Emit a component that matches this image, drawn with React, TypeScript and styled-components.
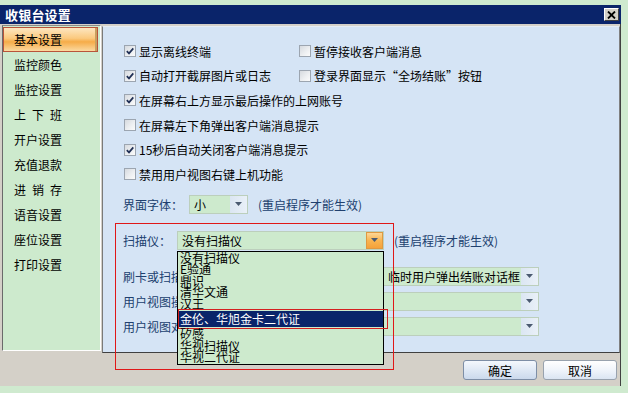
import React from 'react';
import styled, { createGlobalStyle } from 'styled-components';

const GlobalStyle = createGlobalStyle`
  html, body {
    margin: 0;
    padding: 0;
  }
  body {
    background: #cfeacf;
    font-family: 'Noto Sans CJK SC', 'Liberation Sans', sans-serif;
    font-size: 12px;
    color: #000;
  }
`;

const menuItems = [
  { label: '基本设置' },
  { label: '监控颜色' },
  { label: '监控设置' },
  { label: '上下班', spread: true },
  { label: '开户设置' },
  { label: '充值退款' },
  { label: '进销存', spread: true },
  { label: '语音设置' },
  { label: '座位设置' },
  { label: '打印设置' }
];

const scanners = [
  '没有扫描仪',
  'E验通',
  '鼎识',
  '清华文通',
  '汉王',
  '金伦、华旭金卡二代证',
  '矽感',
  '华视扫描仪',
  '华视二代证'
];

const CheckMark = (): JSX.Element => (
  <svg width="10" height="10" viewBox="0 0 10 10">
    <path d="M1.8 5.2 L4 7.4 L8.3 2.4" fill="none" stroke="#1f2f55" strokeWidth="1.7" />
  </svg>
);

const Arrow = (): JSX.Element => (
  <svg width="7" height="4" viewBox="0 0 7 4">
    <path d="M0 0 H7 L3.5 4 Z" fill="#4a5a70" />
  </svg>
);

interface CheckProps {
  label: string;
  checked?: boolean;
  wide?: boolean;
}

const Check = ({ label, checked, wide }: CheckProps): JSX.Element => (
  <CheckItem wide={wide}>
    <Box>{checked && <CheckMark />}</Box>
    <span>{label}</span>
  </CheckItem>
);

interface ComboProps {
  value?: string;
  width?: number;
  hot?: boolean;
  children?: React.ReactNode;
}

const Combo = ({ value, width, hot, children }: ComboProps): JSX.Element => (
  <ComboBox style={width ? { width } : undefined} grow={!width}>
    <ComboText>{value}</ComboText>
    <ComboButton hot={hot}>
      <Arrow />
    </ComboButton>
    {children}
  </ComboBox>
);

const App = (): JSX.Element => {
  return (
    <>
      <GlobalStyle />
      <Window>
        <TitleBar>
          <Title>收银台设置</Title>
          <CloseButton>
            <svg width="9" height="8" viewBox="0 0 9 8">
              <path d="M1 0.5 L8 7.5 M8 0.5 L1 7.5" stroke="#000" strokeWidth="1.8" />
            </svg>
          </CloseButton>
        </TitleBar>
        <Main>
          <Sidebar>
            {menuItems.map((item, i) => (
              <MenuItem key={item.label} selected={i === 0} spread={item.spread}>
                {item.label}
              </MenuItem>
            ))}
          </Sidebar>
          <Panel>
            <CheckGrid>
              <Check label="显示离线终端" checked />
              <Check label="暂停接收客户端消息" />
              <Check label="自动打开截屏图片或日志" checked />
              <Check label="登录界面显示“全场结账”按钮" />
              <Check label="在屏幕右上方显示最后操作的上网账号" checked wide />
              <Check label="在屏幕左下角弹出客户端消息提示" wide />
              <Check label="15秒后自动关闭客户端消息提示" checked wide />
              <Check label="禁用用户视图右键上机功能" wide />
            </CheckGrid>
            <FieldRow>
              <FieldLabel>界面字体：</FieldLabel>
              <Combo value="小" width={59} />
              <Note>(重启程序才能生效)</Note>
            </FieldRow>
            <FieldRow gap={17}>
              <FieldLabel>扫描仪：</FieldLabel>
              <Combo value="没有扫描仪" width={207} hot>
                <DropList>
                  {scanners.map((name, i) => (
                    <DropItem key={name} selected={i === 5}>
                      {name}
                    </DropItem>
                  ))}
                </DropList>
              </Combo>
              <Note>(重启程序才能生效)</Note>
            </FieldRow>
            <FieldRow gap={17}>
              <FieldLabel>刷卡或扫描后：</FieldLabel>
              <Combo />
              <Combo value="临时用户弹出结账对话框" width={156} />
            </FieldRow>
            <FieldRow gap={6}>
              <FieldLabel>用户视图操作：</FieldLabel>
              <Combo />
            </FieldRow>
            <FieldRow gap={6}>
              <FieldLabel>用户视图对话：</FieldLabel>
              <Combo />
            </FieldRow>
          </Panel>
        </Main>
        <Footer>
          <Button primary>确定</Button>
          <Button>取消</Button>
        </Footer>
        <Annotation />
      </Window>
    </>
  );
};

const Window = styled.div`
  position: relative;
  margin-top: 5px;
  width: 621px;
  height: 381px;
  box-sizing: border-box;
  background: #d4d0c8;
  border-right: 1px solid #404040;
  display: flex;
  flex-direction: column;
`;

const TitleBar = styled.div`
  height: 19px;
  margin-right: -1px;
  background: #0a246a;
  display: flex;
  align-items: center;
  justify-content: space-between;
  padding: 0 2px 0 5px;
`;

const Title = styled.div`
  color: #fff;
  font-weight: 700;
  font-size: 13px;
  letter-spacing: 0.2px;
  line-height: 19px;
`;

const CloseButton = styled.div`
  width: 15px;
  height: 13px;
  box-sizing: border-box;
  background: #d4d0c8;
  border-top: 1px solid #fff;
  border-left: 1px solid #fff;
  border-right: 1px solid #404040;
  border-bottom: 1px solid #404040;
  display: flex;
  align-items: center;
  justify-content: center;
`;

const Main = styled.div`
  display: flex;
  align-items: flex-start;
  height: 329px;
`;

const Sidebar = styled.div`
  margin: 1px 0 0 2px;
  width: 99px;
  height: 326px;
  box-sizing: border-box;
  background: #cdeacd;
  border-top: 1px solid #8a8a8a;
  border-left: 1px solid #6a6a6a;
  border-right: 1px solid #fff;
  border-bottom: 1px solid #fff;
  padding-top: 1px;
`;

const MenuItem = styled.div<{ selected?: boolean; spread?: boolean }>`
  height: 25px;
  box-sizing: border-box;
  width: 95px;
  padding-left: ${({ selected }) => (selected ? '10px' : '11px')};
  display: flex;
  align-items: center;
  font-size: 12px;
  letter-spacing: ${({ spread }) => (spread ? '6px' : '0')};
  color: #000;
  ${({ selected }) =>
    selected &&
    `
    border: 1px solid #b8543a;
    background: linear-gradient(#fde6c0 0%, #fbc97e 45%, #f6ac48 60%, #fbd9a0 100%);
    box-shadow: inset -2px 0 0 #c7a060;
  `}
`;

const Panel = styled.div`
  position: relative;
  flex: 1;
  margin: 2px 0 0 1px;
  height: 327px;
  box-sizing: border-box;
  background: #d5e4f5;
  border-top: 1px solid #e6ecf2;
  border-left: 1px solid #7a7a7a;
  border-right: 1px solid #808080;
  border-bottom: 1px solid #404040;
  padding: 12px 0 0 20px;
`;

const CheckGrid = styled.div`
  display: grid;
  grid-template-columns: 175px 1fr;
  grid-auto-rows: 24.6px;
  margin-left: 1px;
`;

const CheckItem = styled.div<{ wide?: boolean }>`
  display: flex;
  align-items: center;
  gap: 3px;
  white-space: nowrap;
  grid-column: ${({ wide }) => (wide ? '1 / -1' : 'auto')};
`;

const Box = styled.div`
  width: 12px;
  height: 12px;
  box-sizing: border-box;
  border: 1px solid #9ca5b0;
  background: linear-gradient(135deg, #d6dadf 0%, #eef0f2 60%, #fbfbfb 100%);
  display: flex;
  align-items: center;
  justify-content: center;
`;

const FieldRow = styled.div<{ gap?: number }>`
  display: flex;
  align-items: center;
  width: 416px;
  height: 19px;
  margin-top: ${({ gap }) => (gap !== undefined ? gap : 8)}px;
  gap: 6px;
`;

const FieldLabel = styled.span`
  color: #20406e;
  white-space: nowrap;
`;

const Note = styled.span`
  color: #20406e;
  white-space: nowrap;
  margin-left: 4px;
`;

const ComboBox = styled.div<{ grow?: boolean }>`
  position: relative;
  flex: ${({ grow }) => (grow ? '1' : 'none')};
  height: 19px;
  box-sizing: border-box;
  border: 1px solid #bccfbc;
  background: #cdeacd;
  display: flex;
  align-items: stretch;
`;

const ComboText = styled.div`
  flex: 1;
  padding-left: 4px;
  line-height: 17px;
  white-space: nowrap;
  overflow: hidden;
`;

const ComboButton = styled.div<{ hot?: boolean }>`
  width: 17px;
  box-sizing: border-box;
  display: flex;
  align-items: center;
  justify-content: center;
  background: ${({ hot }) =>
    hot
      ? 'linear-gradient(#fcd796 0%, #f8b451 50%, #f5a23a 100%)'
      : 'linear-gradient(90deg, #dbe6f2 0%, #e9f0f8 100%)'};
  border: ${({ hot }) => (hot ? '1px solid #e09840' : 'none')};
`;

const DropList = styled.div`
  position: absolute;
  top: 19px;
  left: -1px;
  width: 207px;
  box-sizing: border-box;
  background: #cdeacd;
  border: 1px solid #000;
  padding: 0 0 1px 1px;
  z-index: 5;
`;

const DropItem = styled.div<{ selected?: boolean }>`
  position: relative;
  height: ${({ selected }) => (selected ? '16px' : '11.5px')};
  line-height: ${({ selected }) => (selected ? '16px' : '11.5px')};
  padding-left: 1px;
  white-space: nowrap;
  color: ${({ selected }) => (selected ? '#fff' : '#000')};
  background: ${({ selected }) => (selected ? '#0a246a' : 'transparent')};
  margin: ${({ selected }) => (selected ? '2px 0 1px' : '0')};

  &::after {
    content: '';
    display: ${({ selected }) => (selected ? 'block' : 'none')};
    position: absolute;
    top: -2px;
    bottom: -2px;
    left: -1px;
    right: -5px;
    border: 1px solid #d42020;
  }
`;

const Footer = styled.div`
  flex: 1;
  display: flex;
  justify-content: flex-end;
  align-items: flex-start;
  padding: 7px 3px 0 0;
  gap: 6px;
`;

const Button = styled.div<{ primary?: boolean }>`
  width: 74px;
  height: 20px;
  box-sizing: border-box;
  border: 1px solid ${({ primary }) => (primary ? '#7d8ea6' : '#98a2ae')};
  border-radius: 3px;
  background: ${({ primary }) =>
    primary
      ? 'linear-gradient(#f4f8fd 0%, #dde7f4 55%, #cbd9ec 100%)'
      : 'linear-gradient(#ffffff 0%, #eef3fa 55%, #dbe5f2 100%)'};
  display: flex;
  align-items: center;
  justify-content: center;
  font-size: 12px;
`;

const Annotation = styled.div`
  position: absolute;
  top: 218px;
  left: 115px;
  width: 279px;
  height: 147px;
  box-sizing: border-box;
  border: 1px solid #e01818;
  pointer-events: none;
  z-index: 6;
`;

export default App;
